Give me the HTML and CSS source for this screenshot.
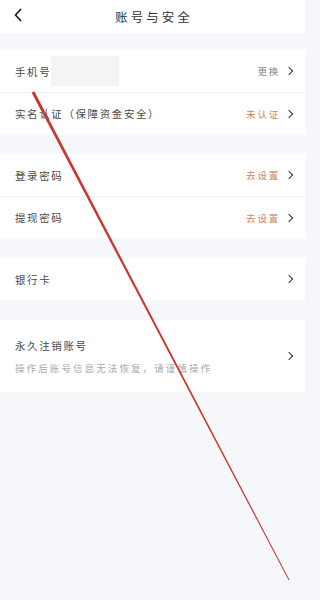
FILE: index.html
```html
<!DOCTYPE html>
<html lang="zh">
<head>
<meta charset="utf-8">
<title>账号与安全</title>
<link rel="stylesheet" href="styles.css">
</head>
<body>
<div class="page">
  <header class="topbar">
    <svg class="back" viewBox="0 0 10 14" width="10" height="14"><path d="M7.5 1.5 L2.5 7 L7.5 12.5" fill="none" stroke="#222" stroke-width="1.8" stroke-linecap="round" stroke-linejoin="round"/></svg>
    <div class="title">账号与安全</div>
  </header>

  <section class="group first">
    <div class="row">
      <div class="label">手机号<span class="mask"></span></div>
      <div class="right"><span class="val gray">更换</span><span class="chev"></span></div>
    </div>
    <div class="row">
      <div class="label">实名认证（保障资金安全）</div>
      <div class="right"><span class="val orange">未认证</span><span class="chev"></span></div>
    </div>
  </section>

  <section class="group">
    <div class="row">
      <div class="label">登录密码</div>
      <div class="right"><span class="val orange">去设置</span><span class="chev"></span></div>
    </div>
    <div class="row">
      <div class="label">提现密码</div>
      <div class="right"><span class="val orange">去设置</span><span class="chev"></span></div>
    </div>
  </section>

  <section class="group">
    <div class="row">
      <div class="label">银行卡</div>
      <div class="right"><span class="chev"></span></div>
    </div>
  </section>

  <section class="group">
    <div class="row tall">
      <div class="stack">
        <div class="label">永久注销账号</div>
        <div class="sub">操作后账号信息无法恢复，请谨慎操作</div>
      </div>
      <div class="right"><span class="chev"></span></div>
    </div>
  </section>

  <svg class="mark" viewBox="0 0 305 600" width="305" height="600">
    <polygon points="31.7,92.7 34.3,91.3 289.4,579.8 288.6,580.2" fill="#c8372e"/>
  </svg>
</div>
</body>
</html>
```

FILE: styles.css
```css
* { box-sizing: border-box; }
html, body {
  margin: 0;
  padding: 0;
  background: #f6f7fb;
  font-family: "Noto Sans CJK SC", "Noto Sans", sans-serif;
}
.page {
  position: relative;
  width: 305px;
  min-height: 600px;
  background: #f6f7fb;
  overflow: hidden;
}
.topbar {
  position: relative;
  height: 33px;
  background: #fff;
  display: flex;
  align-items: center;
  justify-content: center;
}
.back {
  position: absolute;
  left: 13px;
  top: 8px;
}
.title {
  font-size: 12.5px;
  letter-spacing: 3px;
  color: #333;
  margin-left: 3px;
}
.group {
  background: #fff;
  margin-top: 20px;
}
.group.first { margin-top: 17px; }
.row {
  height: 42px;
  display: flex;
  align-items: center;
  justify-content: space-between;
  padding: 0 11px 0 15px;
  border-top: 1px solid #f0f1f4;
}
.row:first-child { border-top: none; }
.row.tall { height: 72px; }
.label {
  display: flex;
  align-items: center;
  font-size: 10.5px;
  letter-spacing: 1.6px;
  color: #4a4a4a;
}
.mask {
  display: inline-block;
  width: 68px;
  height: 30px;
  background: #f4f4f7;
}
.stack {
  display: flex;
  flex-direction: column;
  gap: 8px;
}
.sub {
  font-size: 9.5px;
  letter-spacing: 2.1px;
  color: #aaa;
}
.right {
  display: flex;
  align-items: center;
  gap: 6px;
}
.val {
  font-size: 9.5px;
  letter-spacing: 1.8px;
}
.gray { color: #888; }
.orange { color: #c98860; }
.chev {
  display: inline-block;
  width: 6px;
  height: 6px;
  border-top: 1.5px solid #333;
  border-right: 1.5px solid #333;
  transform: rotate(45deg);
  margin-right: 2px;
}
.mark {
  position: absolute;
  left: 0;
  top: 0;
  pointer-events: none;
}
```
